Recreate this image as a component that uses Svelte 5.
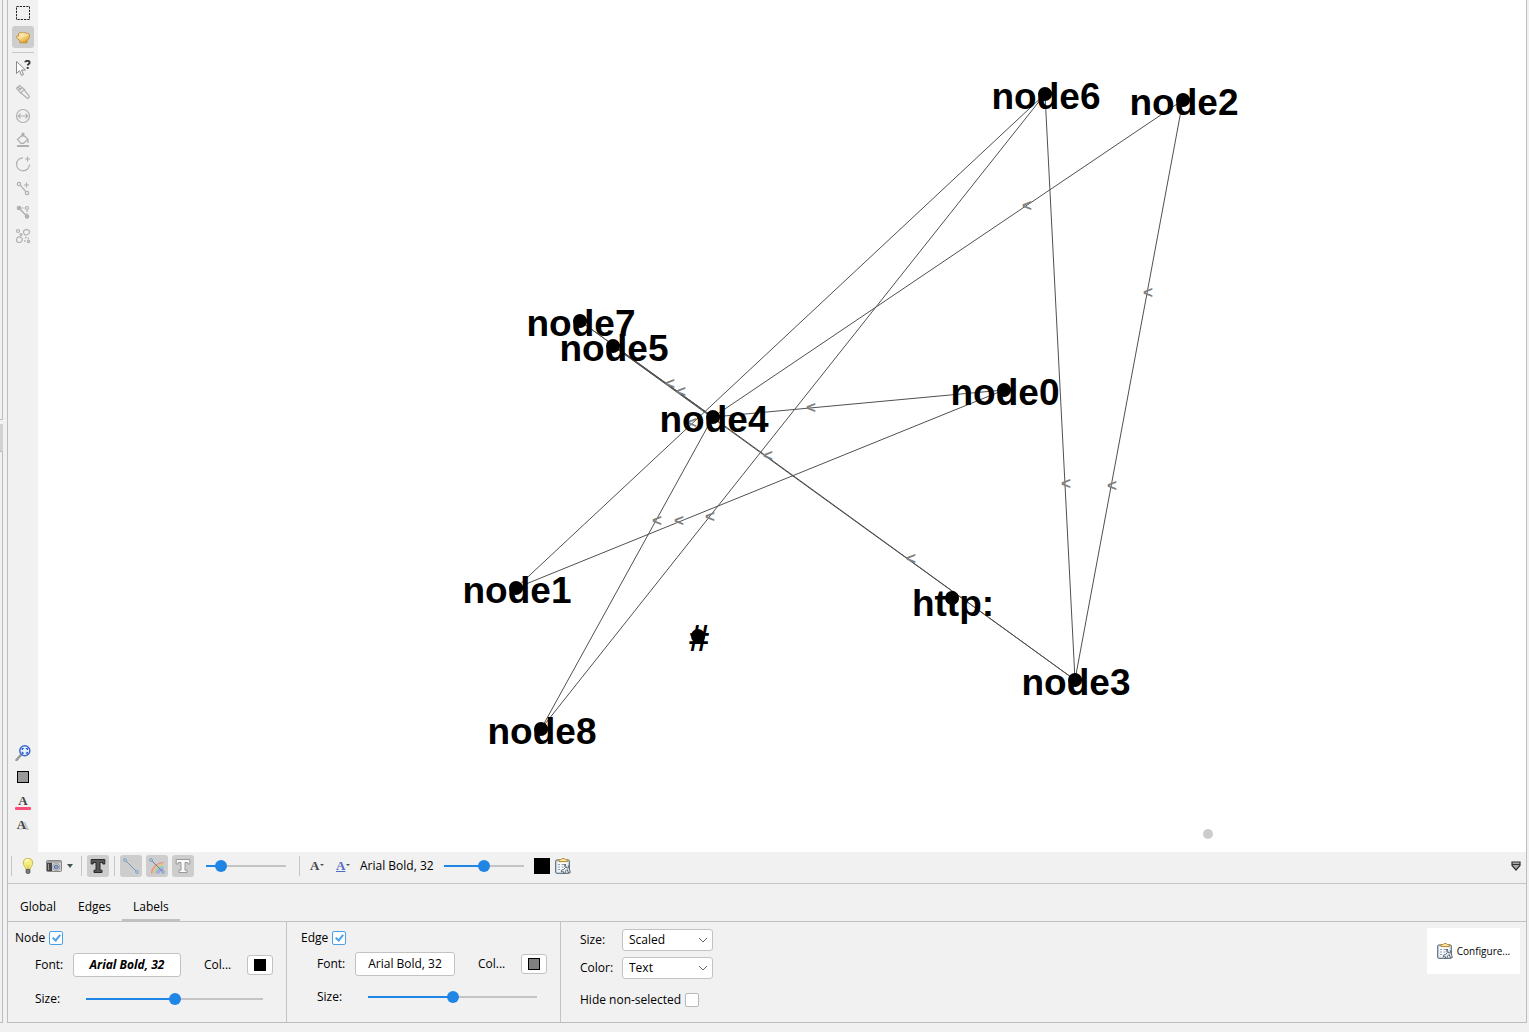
<script>
  const nodes = [
    { label: 'node6', x: 1045, y: 94 },
    { label: 'node2', x: 1183, y: 100 },
    { label: 'node7', x: 580, y: 321 },
    { label: 'node5', x: 613, y: 346 },
    { label: 'node0', x: 1004, y: 390 },
    { label: 'node4', x: 713, y: 417 },
    { label: 'node1', x: 516, y: 588 },
    { label: 'http:', x: 952, y: 598, drop: 18 },
    { label: '#', x: 698, y: 636 },
    { label: 'node3', x: 1075, y: 680 },
    { label: 'node8', x: 541, y: 729 }
  ];
  const links = [
    ['node6', 'node1'], ['node6', 'node8'], ['node6', 'node3'],
    ['node2', 'node4'], ['node2', 'node3'], ['node0', 'node4'],
    ['node0', 'node1'], ['node4', 'node8'], ['node7', 'node4'],
    ['node5', 'node4'], ['node5', 'node3'], ['node7', 'node3']
  ];
  const find = (label) => nodes.find((n) => n.label === label);
  const edges = links.map(([a, b]) => ({ a: find(a), b: find(b) }));
  const marks = [
    [1027, 206], [1148, 293], [1066, 484], [1112, 486], [811, 408],
    [670, 384], [681, 392], [692, 423], [768, 456], [911, 559],
    [657, 521], [679, 521], [710, 517]
  ];

  let tab = $state('Labels');
  let edgeWeight = $state(13);
  let fontScale = $state(50);
  let nodeSize = $state(50);
  let edgeSize = $state(50);
  let nodeOn = $state(true);
  let edgeOn = $state(true);
  let hideOthers = $state(false);
</script>

{#snippet clipboard()}
  <svg class="icon" viewBox="0 0 16 16" aria-hidden="true">
    <rect x="0.7" y="2" width="13.6" height="13.3" rx="1" fill="#dce6ef" stroke="#4c5e70" />
    <rect x="2.5" y="4" width="10" height="9.6" fill="#f8fafc" />
    <path d="M3 6.5h2M6.500 6.500h4M3 9h2M6.500 9h2M3 11.500h2" stroke="#8c9cae" />
    <path d="M4 3.600V1.600h2L7 .6h2.400l1 1h2v2z" fill="#ffe9a8" stroke="#b7862c" />
    <path d="M10.300 6c-1 1-.9 2.600.2 3.400L8.600 11.500c-1.600-.3-2.600.8-2.300 2.200l1.500-.6.900.9-.7 1.400c1.700.4 2.800-.8 2.500-2.300l1.600-1.600 1.600 3.600 1.700-.7-1.300-3.600c.6-1.200.3-2.500-.7-3.200v2l-1.500.4-.9-1z" fill="#e9edf0" stroke="#4f5b67" stroke-width=".9" />
  </svg>
{/snippet}

<div class="page">
  <div class="side" aria-hidden="true">
    <div class="side-top"></div>
    <div class="side-grip"></div>
    <div class="side-rest"></div>
  </div>

  <main>
    <div class="work">
      <div class="tools" role="toolbar" aria-label="Graph tools">
        <button aria-label="Rectangle selection">
          <svg class="icon" viewBox="0 0 16 16"><rect x="1.5" y="1.5" width="13" height="13" fill="none" stroke="#222" stroke-dasharray="2.25 1" /></svg>
        </button>
        <button class="on" aria-label="Drag">
          <svg class="icon" viewBox="0 0 16 16">
            <defs><linearGradient id="gold" x2=".6" y2="1"><stop offset="0" stop-color="#fffbe6" /><stop offset=".5" stop-color="#f9e09a" /><stop offset="1" stop-color="#dfa021" /></linearGradient></defs>
            <path d="M4.800 13.800v-2L1.700 8.600c-.7-1.500.6-2.300 2-1.300L3.500 5c.2-1.500 1.900-1.700 2.600-.6.400-1.500 2.300-1.500 2.800-.1.700-1.200 2.300-1 2.600.3 1.200-.6 2.900 0 2.900 1.500 0 2.800-.9 4.500-2.400 5.700v2z" fill="url(#gold)" stroke="#c08a2a" stroke-width=".9" />
          </svg>
        </button>
        <hr />
        <button aria-label="Edit">
          <svg class="icon" viewBox="0 0 16 16">
            <path d="M1.500 1.500v12l3-2.800 2 4.700 2-.9-2-4.500h4z" fill="#fff" stroke="#8a8a8a" />
            <path d="M10.200 2.300c0-2 4.500-2 4.500.2 0 1.500-2 1.500-2 3" fill="none" stroke="#333" stroke-width="1.800" /><path d="M11.700 7h2v1.800h-2z" fill="#333" />
          </svg>
        </button>
        <button aria-label="Painter">
          <svg class="icon dim" viewBox="0 0 16 16"><path d="M1.500 4.200 4.700 1.500 9.500 5.500 5.500 9zM3.300 6.400 7.200 3.500M3 3l3 3M5.500 9l1.700 1 4.800 4c1.200.9 3-.9 2-2.200L10.300 7.500 9.500 5.500" /></svg>
        </button>
        <button aria-label="Sizer">
          <svg class="icon dim" viewBox="0 0 16 16"><circle cx="8" cy="8" r="6.500" /><path d="M3.500 8h9M5.500 5.700 3.300 8l2.200 2.300M10.500 5.700 12.700 8l-2.200 2.300" /></svg>
        </button>
        <button aria-label="Brush">
          <svg class="icon dim" viewBox="0 0 16 16"><path d="M2.500 7.500 8 2.300l5 5-4.500 4H6zM7 5V1.800q1-1.300 2 0V5M13 7.300V11" /><path d="M2 14h12" stroke-width="2" /></svg>
        </button>
        <button aria-label="Node pencil">
          <svg class="icon dim" viewBox="0 0 16 16"><path d="M8 1.800A6.500 6.500 0 1 0 14.500 8.500M12.500 .500v5M10 3h5" /></svg>
        </button>
        <button aria-label="Edge pencil">
          <svg class="icon dim" viewBox="0 0 16 16"><circle cx="4" cy="4" r="1.700" /><circle cx="12" cy="13" r="1.700" /><path d="m5.200 5.200 5.500 6.300M11.500 2.500v5M9 5h5" /></svg>
        </button>
        <button aria-label="Shortest path">
          <svg class="icon dim" viewBox="0 0 16 16"><circle cx="4" cy="4" r="1.700" fill="#b3b3b3" /><circle cx="12" cy="12.500" r="1.700" fill="#b3b3b3" /><circle cx="12" cy="4" r="1.500" /><path d="m4 4 8 8.500" stroke-width="1.500" /><path d="M6.500 4h4M12 6v4" stroke-dasharray="2 1" /></svg>
        </button>
        <button aria-label="Heat map">
          <svg class="icon dim" viewBox="0 0 16 16"><circle cx="3" cy="3" r="1.500" /><path d="M9 2.500c2-1.500 5-1 5.500 1s-2 3-3.500 3.500S7.500 4 9 2.500zM2 10c1.500-2 4-1 5 .5s-.5 4-3 4-3-2.500-2-4.500z" /><circle cx="6" cy="6.500" r="1" /><circle cx="13.500" cy="13.500" r="1.200" /><path d="M10 9.500h1.500M12.500 10.500H14M9 13h1.500" stroke-width="1.500" /></svg>
        </button>
        <div class="spring"></div>
        <button aria-label="Center on graph">
          <svg class="icon" viewBox="0 0 16 16"><path d="m1.500 15 4-4.500" stroke="#999" stroke-width="2.600" stroke-linecap="round" /><circle cx="9.800" cy="5.800" r="5" fill="#e9f2ff" stroke="#3c69cf" stroke-width="1.500" /><path d="M7.300 5V3.500h1.500M10.800 3.500h1.500V5M12.300 6.700v1.500h-1.500M8.800 8.200H7.300V6.700" fill="none" stroke="#2456c8" stroke-width="1.200" /></svg>
        </button>
        <button aria-label="Reset colors">
          <svg class="icon" viewBox="0 0 16 16"><rect x="2.500" y="2.500" width="11" height="11" fill="#999" stroke="#000" /></svg>
        </button>
        <button aria-label="Reset label colors" class="glyph under">A</button>
        <button aria-label="Reset label visibility" class="glyph shade">A</button>
      </div>

      <svg class="canvas" viewBox="38 0 1488 852" role="img" aria-label="Graph">
        {#each edges as e}
          <line class="edge" x1={e.a.x} y1={e.a.y} x2={e.b.x} y2={e.b.y} />
        {/each}
        {#each nodes as n}
          <circle cx={n.x} cy={n.y} r="7" />
        {/each}
        <circle class="cursor" cx="1208" cy="834" r="5" />
        {#each marks as [x, y]}
          <text class="mark" {x} y={y + 5}>&lt;</text>
        {/each}
        {#each nodes as n}
          <text class="name" x={n.x + 1} y={n.y + (n.drop ?? 15)}>{n.label}</text>
        {/each}
      </svg>
    </div>

    <div class="bar" role="toolbar" aria-label="Display">
      <span class="sep"></span>
      <button class="bulb" aria-label="Background">
        <svg class="icon" viewBox="0 0 16 16"><path d="M5.800 11C5.500 9 3.300 7.700 3.300 4.800a4.700 4.700 0 0 1 9.400 0c0 2.900-2.200 4.200-2.500 6.200z" fill="#f7ee83" stroke="#c6b84e" /><path d="M5.500 3.500Q6.500 1.500 8.500 2" fill="none" stroke="#fff" stroke-width="1.500" /><path d="M6.700 6.500 7.500 10.500M9.300 6.500l-.8 4" stroke="#d0bd46" stroke-width=".7" /><path d="M6 11.500h4v3l-1 1.200H7L6 14.500z" fill="#777" stroke="#444" stroke-width=".6" /></svg>
      </button>
      <button class="camera" aria-label="Screenshot">
        <svg class="icon" viewBox="0 0 16 16"><rect x=".5" y="2.500" width="15" height="11" rx="1" fill="#cfcfcf" stroke="#888" /><path d="M1 4.500h5V13H1z" fill="#444" /><path d="M2 6h1v6H2z" fill="#999" /><path d="M1 3h14v1.700H1z" fill="#a5a5a5" /><circle cx="10.300" cy="9" r="3.500" fill="#eee" stroke="#999" /><circle cx="10.300" cy="9" r="2" fill="#8da3cd" stroke="#53699a" /></svg>
      </button>
      <button class="caret" aria-label="Screenshot options"><svg viewBox="0 0 6 4"><path d="M0 0h6L3 4z" fill="#455" /></svg></button>
      <span class="sep"></span>
      <button class="on" aria-label="Show node labels">
        <svg class="icon" viewBox="0 0 16 16"><path d="M1.200 1.500h13.600v4.500h-2V4.500H10v7.700h2v2.300H4v-2.300h2V4.500H3.200V6h-2z" fill="#555" stroke="#2a2a2a" /></svg>
      </button>
      <span class="sep"></span>
      <span class="group">
        <button class="on" aria-label="Show edges">
          <svg class="icon" viewBox="0 0 16 16"><path d="m2 2 12 12" stroke="#7195bd" /><circle cx="2" cy="2" r="1.300" fill="#e5f0fb" stroke="#7195bd" /><circle cx="14" cy="14" r="1.300" fill="#e5f0fb" stroke="#7195bd" /></svg>
        </button>
        <button class="on" aria-label="Edges use source node color">
          <svg class="icon" viewBox="0 0 16 16"><g fill="none" stroke-width="1.700"><path d="M2.500 15.500Q4 5.500 14.500 4.500" stroke="#e99393" /><path d="M4.200 15.500Q5.500 7.200 14.500 6.200" stroke="#ebc38c" /><path d="M5.900 15.500Q7 9 14.500 7.900" stroke="#a7d69b" /><path d="M7.600 15.500Q8.500 10.500 14.500 9.600" stroke="#8fb8e5" /><path d="M9.300 15.500Q10 12 14.500 11.300" stroke="#b79bd8" /></g><path d="m2 2 12 12" stroke="#5d84b0" /><circle cx="2" cy="2" r="1.300" fill="#e5f0fb" stroke="#7195bd" /><circle cx="14" cy="14" r="1.300" fill="#e5f0fb" stroke="#7195bd" /></svg>
        </button>
        <button class="on" aria-label="Show edge labels">
          <svg class="icon" viewBox="0 0 16 16"><path d="M1.200 1.500h13.600v4.500h-2V4.500H10v7.700h2v2.300H4v-2.300h2V4.500H3.200V6h-2z" fill="#fafafa" stroke="#999" /></svg>
        </button>
      </span>
      <input class="short" type="range" aria-label="Edge weight" bind:value={edgeWeight} style:--p="{edgeWeight}%" />
      <span class="sep"></span>
      <button class="glyph drop" aria-label="Label size mode">A</button>
      <button class="glyph drop blue" aria-label="Label color mode">A</button>
      <button class="fontname">Arial Bold, 32</button>
      <input class="short" type="range" aria-label="Font scale" bind:value={fontScale} style:--p="{fontScale}%" />
      <button class="chip" aria-label="Label color"></button>
      <button class="attrs" aria-label="Label attributes">{@render clipboard()}</button>
      <span class="spring"></span>
      <button class="fold" aria-label="Collapse panel">
        <svg viewBox="0 0 10 10"><path d="M1 1h8v3.500L5 9 1 4.500z" fill="#aaa" stroke="#333" stroke-width="1.200" /><path d="M1 3.500h8" stroke="#333" /></svg>
      </button>
    </div>

    <div class="tabs" role="tablist">
      {#each ['Global', 'Edges', 'Labels'] as name}
        <button role="tab" aria-selected={tab === name} class:active={tab === name} onclick={() => (tab = name)}>{name}</button>
      {/each}
    </div>

    <div class="panel">
      <section class="node">
        <label class="head">Node <input type="checkbox" bind:checked={nodeOn} /></label>
        <div class="row">
          <span class="cap">Font:</span>
          <button class="field heavy">Arial Bold, 32</button>
          <span class="col">Col...</span>
          <button class="swatch" aria-label="Node label color"><i></i></button>
        </div>
        <div class="row size">
          <label class="cap" for="node-size">Size:</label>
          <input id="node-size" type="range" bind:value={nodeSize} style:--p="{nodeSize}%" />
        </div>
      </section>
      <section class="link">
        <label class="head">Edge <input type="checkbox" bind:checked={edgeOn} /></label>
        <div class="row">
          <span class="cap">Font:</span>
          <button class="field">Arial Bold, 32</button>
          <span class="col">Col...</span>
          <button class="swatch gray" aria-label="Edge label color"><i></i></button>
        </div>
        <div class="row size">
          <label class="cap" for="edge-size">Size:</label>
          <input id="edge-size" type="range" bind:value={edgeSize} style:--p="{edgeSize}%" />
        </div>
      </section>
      <section class="modes">
        <div class="pick">
          <label for="mode-size">Size:</label>
          <span class="combo"><select id="mode-size"><option>Scaled</option><option>Fixed</option></select><svg viewBox="0 0 10 6"><path d="m1 1 4 4 4-4" /></svg></span>
        </div>
        <div class="pick">
          <label for="mode-color">Color:</label>
          <span class="combo"><select id="mode-color"><option>Text</option><option>Object</option></select><svg viewBox="0 0 10 6"><path d="m1 1 4 4 4-4" /></svg></span>
        </div>
        <label class="hide">Hide non-selected <input type="checkbox" bind:checked={hideOthers} /></label>
      </section>
      <span class="spring"></span>
      <button class="configure">{@render clipboard()}Configure...</button>
    </div>
  </main>
</div>

<style>
  :global(body) { margin: 0; background: #f1f1f1; }
  .page {
    box-sizing: border-box;
    display: flex;
    gap: 4px;
    min-height: 100vh;
    padding: 0 2px 9px 0;
    background: #f1f1f1;
    color: #000;
    font: 12px/16px "Open Sans", "Noto Sans", sans-serif;
  }
  button, input, select { font: inherit; color: inherit; margin: 0; box-sizing: border-box; }
  button { padding: 0; border: 0; background: none; white-space: nowrap; }
  .spring { flex: 1; }
  .icon { display: block; width: 16px; height: 16px; flex: none; }

  .side { flex: none; width: 3px; display: flex; flex-direction: column; }
  .side-top { box-sizing: border-box; height: 420px; border: solid #bdbdbd; border-width: 0 1px 1px 0; }
  .side-grip { height: 27px; margin-top: 4px; background: #d2d2d2; }
  .side-rest { flex: 1; border: 1px solid #bdbdbd; border-left: 0; }

  main { flex: 1; min-width: 0; display: flex; flex-direction: column; border: 1px solid #bdbdbd; border-top: 0; }
  .work { flex: 1; display: flex; min-height: 0; }
  .tools { box-sizing: border-box; width: 30px; flex: none; display: flex; flex-direction: column; align-items: center; gap: 2px; padding: 2px 0 16px; }
  .tools button, .bar .on { flex: none; width: 22px; height: 22px; display: flex; align-items: center; justify-content: center; border-radius: 3px; }
  .tools .on, .bar .on { background: #cdcdcd; }
  hr { width: 22px; height: 1px; margin: 2px 0; border: 0; background: #c6c6c6; }
  .dim { fill: none; stroke: #b0b0b0; stroke-width: 1.2; }

  .glyph { position: relative; font: bold 13px/16px "Liberation Serif", serif; color: #444; }
  .under::after { content: ""; position: absolute; left: 3px; right: 3px; bottom: 2px; height: 3px; border-radius: 1px; background: #fa4e78; }
  .shade { text-shadow: 3px 1px 0 #c8c8c8; }
  .tools .shade { padding-right: 3px; }

  .canvas { flex: 1; min-width: 0; display: block; background: #fff; }
  .edge { stroke: #505050; stroke-width: 1; }
  .cursor { fill: #ccc; }
  .name { font: bold 37px "Liberation Sans", Arial, sans-serif; text-anchor: middle; }
  .mark { font: bold 17px "Liberation Sans", Arial, sans-serif; text-anchor: middle; fill: #808080; }

  .bar { height: 32px; display: flex; align-items: center; padding: 0 5px 3px 3px; box-sizing: border-box; border-bottom: 1px solid #c4c4c4; }
  .bar > * { flex: none; }
  .bar > .spring { flex: 1; }
  .sep { width: 1px; height: 20px; background: #c6c6c6; }
  .bulb { margin-left: 8px; }
  .camera { margin-left: 10px; }
  .caret { margin: 0 8px 0 5px; }
  .caret svg { display: block; width: 6px; height: 4px; }
  .bar > .on { margin: 0 5px; }
  .group { display: flex; gap: 4px; margin: 0 12px 0 5px; }
  input[type="range"] { appearance: none; height: 14px; background: linear-gradient(to right, #2086e6 var(--p), #c4c4c4 var(--p)) center / 100% 2px no-repeat; }
  input[type="range"]::-webkit-slider-thumb { appearance: none; width: 12px; height: 12px; border-radius: 50%; background: #2086e6; }
  .short { width: 80px; }
  .short + .sep { margin: 0 10px 0 13px; }
  .drop { width: 14px; margin-right: 12px; text-align: left; }
  .drop::after { content: ""; position: absolute; right: 0; top: 6px; border: 2px solid transparent; border-top-color: #456; border-bottom: 0; }
  .blue { color: #4f6cc8; margin-right: 10px; text-decoration: underline; }
  .fontname { margin-right: 10px; }
  .chip { width: 16px; height: 16px; margin: 0 5px 0 10px; background: #000; }
  .fold svg { display: block; width: 10px; height: 10px; }

  .tabs { height: 38px; box-sizing: border-box; display: flex; align-items: flex-end; padding-left: 1px; border-bottom: 1px solid #c0c0c0; }
  .tabs button { height: 24px; padding: 0 11px 3px; border-bottom: 2px solid transparent; }
  .tabs .active { border-color: #c0c0c0; }

  .panel { height: 100px; display: flex; }
  section { box-sizing: border-box; flex: none; padding-top: 8px; border-right: 1px solid #c4c4c4; }
  .head, .hide { display: flex; align-items: center; gap: 4px; }
  .head { height: 16px; }
  .node { width: 279px; padding-left: 7px; }
  .link { width: 274px; padding-left: 14px; }
  .modes { border: 0; padding: 7px 0 0 19px; }
  .row { display: flex; align-items: center; margin-left: 20px; height: 24px; }
  .node .row { padding-top: 7px; }
  .link .row { margin-left: 16px; padding-top: 6px; }
  .row.size { height: 30px; }
  .size .cap { width: 51px; }
  .cap { width: 38px; flex: none; }
  .row.size .cap { width: 51px; }
  .field { width: 108px; height: 24px; background: #fff; border: 1px solid #c2c2c2; border-radius: 3px; }
  .link .field { width: 100px; }
  .heavy { font-weight: bold; font-style: italic; }
  .col { width: 43px; margin-left: 23px; }
  .swatch { width: 26px; height: 20px; display: grid; place-items: center; background: #fff; border: 1px solid #c2c2c2; border-radius: 3px; }
  .swatch i { box-sizing: border-box; width: 12px; height: 12px; background: #000; border: 1px solid #000; }
  .gray i { background: #808080; }
  .node [type="range"] { width: 177px; }
  .link [type="range"] { width: 169px; }
  input[type="checkbox"] { appearance: none; position: relative; width: 14px; height: 14px; background: #fff; border: 1px solid #b8b8b8; border-radius: 2px; }
  input[type="checkbox"]:checked { border-color: #4ba0ea; }
  input[type="checkbox"]:checked::after { content: ""; position: absolute; left: 4px; top: 1px; width: 3px; height: 6px; border: solid #4ba0ea; border-width: 0 2px 2px 0; transform: rotate(40deg); }
  .pick { display: grid; grid-template-columns: 42px 91px; align-items: center; margin-bottom: 6px; }
  .combo { position: relative; }
  .combo svg { position: absolute; right: 5px; top: 8px; width: 10px; height: 6px; fill: none; stroke: #666; pointer-events: none; }
  select { display: block; appearance: none; width: 100%; height: 22px; padding: 0 6px; background: #fff; border: 1px solid #c2c2c2; border-radius: 3px; }
  .hide { margin-top: 13px; }
  .configure { width: 93px; height: 46px; margin: 6px 6px 0 0; display: flex; align-items: center; justify-content: center; gap: 4px; background: #fff; font-size: 10px; }
</style>
